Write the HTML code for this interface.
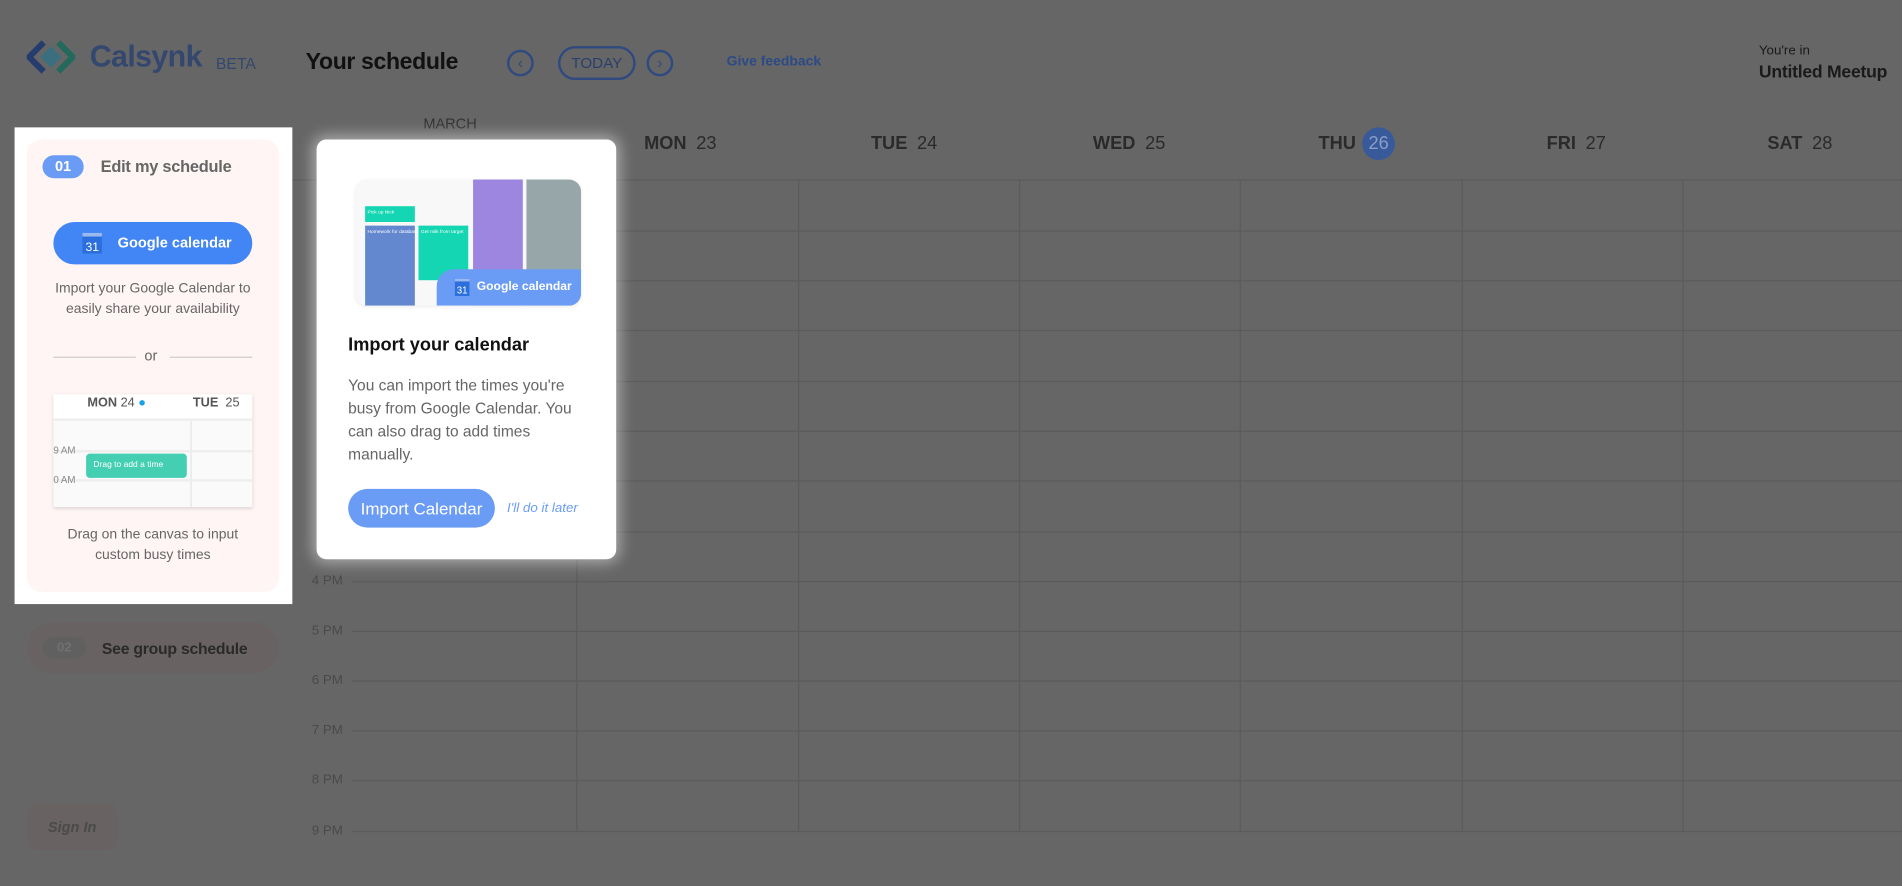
<!DOCTYPE html>
<html><head><meta charset="utf-8"><style>
*{margin:0;padding:0;box-sizing:border-box}
html,body{width:1902px;height:886px;overflow:hidden;background:#666;font-family:"Liberation Sans",sans-serif}
#w{position:absolute;left:0;top:0;width:1568px;height:730px;transform:scale(1.21301);transform-origin:0 0}
.a{position:absolute;white-space:nowrap}
.hl{position:absolute;left:290px;width:1278px;height:1px;background:#5b5b5b}
.vl{position:absolute;top:148px;height:537px;width:1px;background:#5b5b5b}
.tl{position:absolute;left:257px;font-size:11px;color:#4a4a4a}
.dh{position:absolute;top:110px;font-size:15px;color:#2a2a2a}
.dh b{margin-right:8px}
</style></head><body><div id="w">
<svg class="a" style="left:22px;top:33px" width="40" height="28" viewBox="0 0 40 28"><path d="M14 2 L2 14 L14 26" fill="none" stroke="#253d6e" stroke-width="5"/><path d="M26 2 L38 14 L26 26" fill="none" stroke="#246a5c" stroke-width="5"/><path d="M20 5 L29 14 L20 23 L11 14Z" fill="#3b6f7f"/></svg>
<div class="a" style="left:74px;top:33px;font-size:25px;font-weight:bold;color:#34476e;letter-spacing:-0.5px">Calsynk</div>
<div class="a" style="left:178px;top:45px;font-size:13px;color:#34476e">BETA</div>
<div class="a" style="left:252px;top:41px;font-size:19px;font-weight:bold;color:#111;letter-spacing:-0.3px">Your schedule</div>
<div class="a" style="left:418px;top:41px;width:22px;height:22px;border:2px solid #2f4a80;border-radius:50%;color:#2f4a80;font-size:13px;text-align:center;line-height:18px">‹</div>
<div class="a" style="left:460px;top:38px;width:64px;height:28px;border:2px solid #2f4a80;border-radius:14px;color:#283f6e;font-size:12.5px;text-align:center;line-height:24px">TODAY</div>
<div class="a" style="left:533px;top:41px;width:22px;height:22px;border:2px solid #2f4a80;border-radius:50%;color:#2f4a80;font-size:13px;text-align:center;line-height:18px">›</div>
<div class="a" style="left:599px;top:45px;font-size:11.5px;font-weight:bold;color:#2c4a85">Give feedback</div>
<div class="a" style="left:1450px;top:36px;font-size:11px;color:#1a1a1a">You're in</div>
<div class="a" style="left:1450px;top:52px;font-size:14.5px;font-weight:bold;color:#1a1a1a;letter-spacing:-0.2px">Untitled Meetup</div>
<div class="a" style="left:349px;top:95px;font-size:12px;color:#333">MARCH</div>
<div class="dh" style="left:531px"><b>MON</b>23</div>
<div class="dh" style="left:718px"><b>TUE</b>24</div>
<div class="dh" style="left:901px"><b>WED</b>25</div>
<div class="dh" style="left:1087px"><b>THU</b></div>
<div class="a" style="left:1123px;top:105px;width:27px;height:27px;border-radius:50%;background:#38599a;color:#8a9fc8;font-size:15px;text-align:center;line-height:27px">26</div>
<div class="dh" style="left:1275px"><b>FRI</b>27</div>
<div class="dh" style="left:1457px"><b>SAT</b>28</div>
<div class="hl" style="top:148px;left:240px;width:1328px"></div>
<div class="hl" style="top:190px"></div><div class="hl" style="top:231px"></div><div class="hl" style="top:272px"></div><div class="hl" style="top:314px"></div><div class="hl" style="top:355px"></div><div class="hl" style="top:396px"></div><div class="hl" style="top:438px"></div><div class="hl" style="top:479px"></div><div class="hl" style="top:520px"></div><div class="hl" style="top:561px"></div><div class="hl" style="top:602px"></div><div class="hl" style="top:643px"></div><div class="hl" style="top:685px"></div>
<div class="vl" style="left:475px"></div><div class="vl" style="left:658px"></div><div class="vl" style="left:840px"></div><div class="vl" style="left:1022px"></div><div class="vl" style="left:1205px"></div><div class="vl" style="left:1387px"></div>
<div class="tl" style="top:473px">4 PM</div><div class="tl" style="top:514px">5 PM</div><div class="tl" style="top:555px">6 PM</div><div class="tl" style="top:596px">7 PM</div><div class="tl" style="top:637px">8 PM</div><div class="tl" style="top:679px">9 PM</div>
<div class="a" style="left:12px;top:105px;width:229px;height:393px;background:#fff"></div>
<div class="a" style="left:22px;top:115px;width:208px;height:373px;background:#fff5f5;border-radius:12px"></div>
<div class="a" style="left:35px;top:128px;width:34px;height:19px;border-radius:10px;background:#6b9cf5;color:#fff;font-size:12px;font-weight:bold;text-align:center;line-height:19px">01</div>
<div class="a" style="left:83px;top:130px;font-size:13.5px;font-weight:bold;color:#666;letter-spacing:-0.2px">Edit my schedule</div>
<div class="a" style="left:44px;top:183px;width:164px;height:35px;border-radius:18px;background:#4285f4;color:#fff;font-size:12px;font-weight:bold;line-height:35px;padding-left:53px">Google calendar</div>
<div class="a" style="left:68px;top:192px;width:16px;height:17px;background:#2a6fdb;color:#fff;font-size:10px;text-align:center;line-height:19px;border-top:3px solid #9bb9ef">31</div>
<div class="a" style="left:22px;top:230px;width:208px;text-align:center;font-size:11.5px;line-height:17px;color:#666">Import your Google Calendar to<br>easily share your availability</div>
<div class="a" style="left:44px;top:294px;width:68px;height:1px;background:#ccc"></div>
<div class="a" style="left:140px;top:294px;width:68px;height:1px;background:#ccc"></div>
<div class="a" style="left:119px;top:286px;font-size:12px;color:#666">or</div>
<div class="a" style="left:44px;top:325px;width:164px;height:93px;background:#fafafa;overflow:hidden;box-shadow:0 1px 3px rgba(0,0,0,.15)">
 <div class="a" style="left:0;top:0;width:164px;height:22px;background:#fff;border-bottom:2px solid #eee"></div>
 <div class="a" style="left:28px;top:1px;font-size:10.5px;color:#555"><b>MON</b> 24 <span style="color:#1aa0e8">●</span></div>
 <div class="a" style="left:115px;top:1px;font-size:10.5px;color:#555"><b>TUE</b>&nbsp; 25</div>
 <div class="a" style="left:113px;top:22px;width:1px;height:71px;background:#e6e6e6"></div>
 <div class="a" style="left:0;top:46px;width:164px;height:2px;background:#eee"></div>
 <div class="a" style="left:0;top:70px;width:164px;height:2px;background:#eee"></div>
 <div class="a" style="left:0;top:42px;font-size:8px;color:#888">9 AM</div>
 <div class="a" style="left:0;top:66px;font-size:8px;color:#888">0 AM</div>
 <div class="a" style="left:27px;top:49px;width:83px;height:20px;border-radius:3px;background:#44cfb2;color:#fff;font-size:7px;line-height:20px;padding-left:6px">Drag to add a time</div>
</div>
<div class="a" style="left:22px;top:433px;width:208px;text-align:center;font-size:11.5px;line-height:17px;color:#666">Drag on the canvas to input<br>custom busy times</div>
<div class="a" style="left:22px;top:513px;width:208px;height:42px;border-radius:21px;background:#686262"></div>
<div class="a" style="left:35px;top:525px;width:36px;height:18px;border-radius:9px;background:#606060;color:#717171;font-size:11px;font-weight:bold;text-align:center;line-height:18px">02</div>
<div class="a" style="left:84px;top:527px;font-size:13px;font-weight:bold;color:#2a2a2a;letter-spacing:-0.2px">See group schedule</div>
<div class="a" style="left:22px;top:663px;width:75px;height:38px;border-radius:8px;background:#686262;color:#4a4a4a;font-size:12px;font-weight:bold;font-style:italic;text-align:center;line-height:38px">Sign In</div>
<div class="a" style="left:261px;top:115px;width:247px;height:346px;background:#fff;border-radius:8px;box-shadow:0 0 12px 3px rgba(255,255,255,.45)">
 <div class="a" style="left:32px;top:33px;width:186px;height:104px;background:#f8f8f8;border-radius:10px;overflow:hidden;box-shadow:0 1px 3px rgba(0,0,0,.08)">
  <div class="a" style="left:8px;top:22px;width:41px;height:13px;background:#14d6b2;color:#fff;font-size:4px;padding:2px">Pick up Nick</div>
  <div class="a" style="left:8px;top:38px;width:41px;height:66px;background:#6488d0;color:#fff;font-size:4px;padding:2px">Homework for database class</div>
  <div class="a" style="left:52px;top:38px;width:41px;height:45px;background:#14d6b2;color:#fff;font-size:4px;padding:2px">Get milk from target</div>
  <div class="a" style="left:97px;top:0;width:41px;height:104px;background:#9d86e0"></div>
  <div class="a" style="left:141px;top:0;width:45px;height:104px;background:#97a6a9"></div>
  <div class="a" style="left:67px;top:74px;width:119px;height:30px;background:#6b9cf5;border-radius:14px 0 10px 0;color:#fff;font-size:10px;font-weight:bold;line-height:30px;padding-left:33px">Google calendar</div>
  <div class="a" style="left:82px;top:82px;width:12px;height:14px;background:#2a6fdb;color:#fff;font-size:8px;text-align:center;line-height:15px;border-top:2px solid #9bb9ef">31</div>
 </div>
 <div class="a" style="left:26px;top:161px;font-size:15px;font-weight:bold;color:#111">Import your calendar</div>
 <div class="a" style="left:26px;top:193px;font-size:12.8px;line-height:19px;color:#666;white-space:normal;width:200px">You can import the times you're busy from Google Calendar. You can also drag to add times manually.</div>
 <div class="a" style="left:26px;top:288px;width:121px;height:32px;border-radius:16px;background:#6b9cf5;color:#fff;font-size:14px;text-align:center;line-height:32px">Import Calendar</div>
 <div class="a" style="left:157px;top:298px;font-size:11px;font-style:italic;color:#6b9cf5">I'll do it later</div>
</div>
</div></body></html>
